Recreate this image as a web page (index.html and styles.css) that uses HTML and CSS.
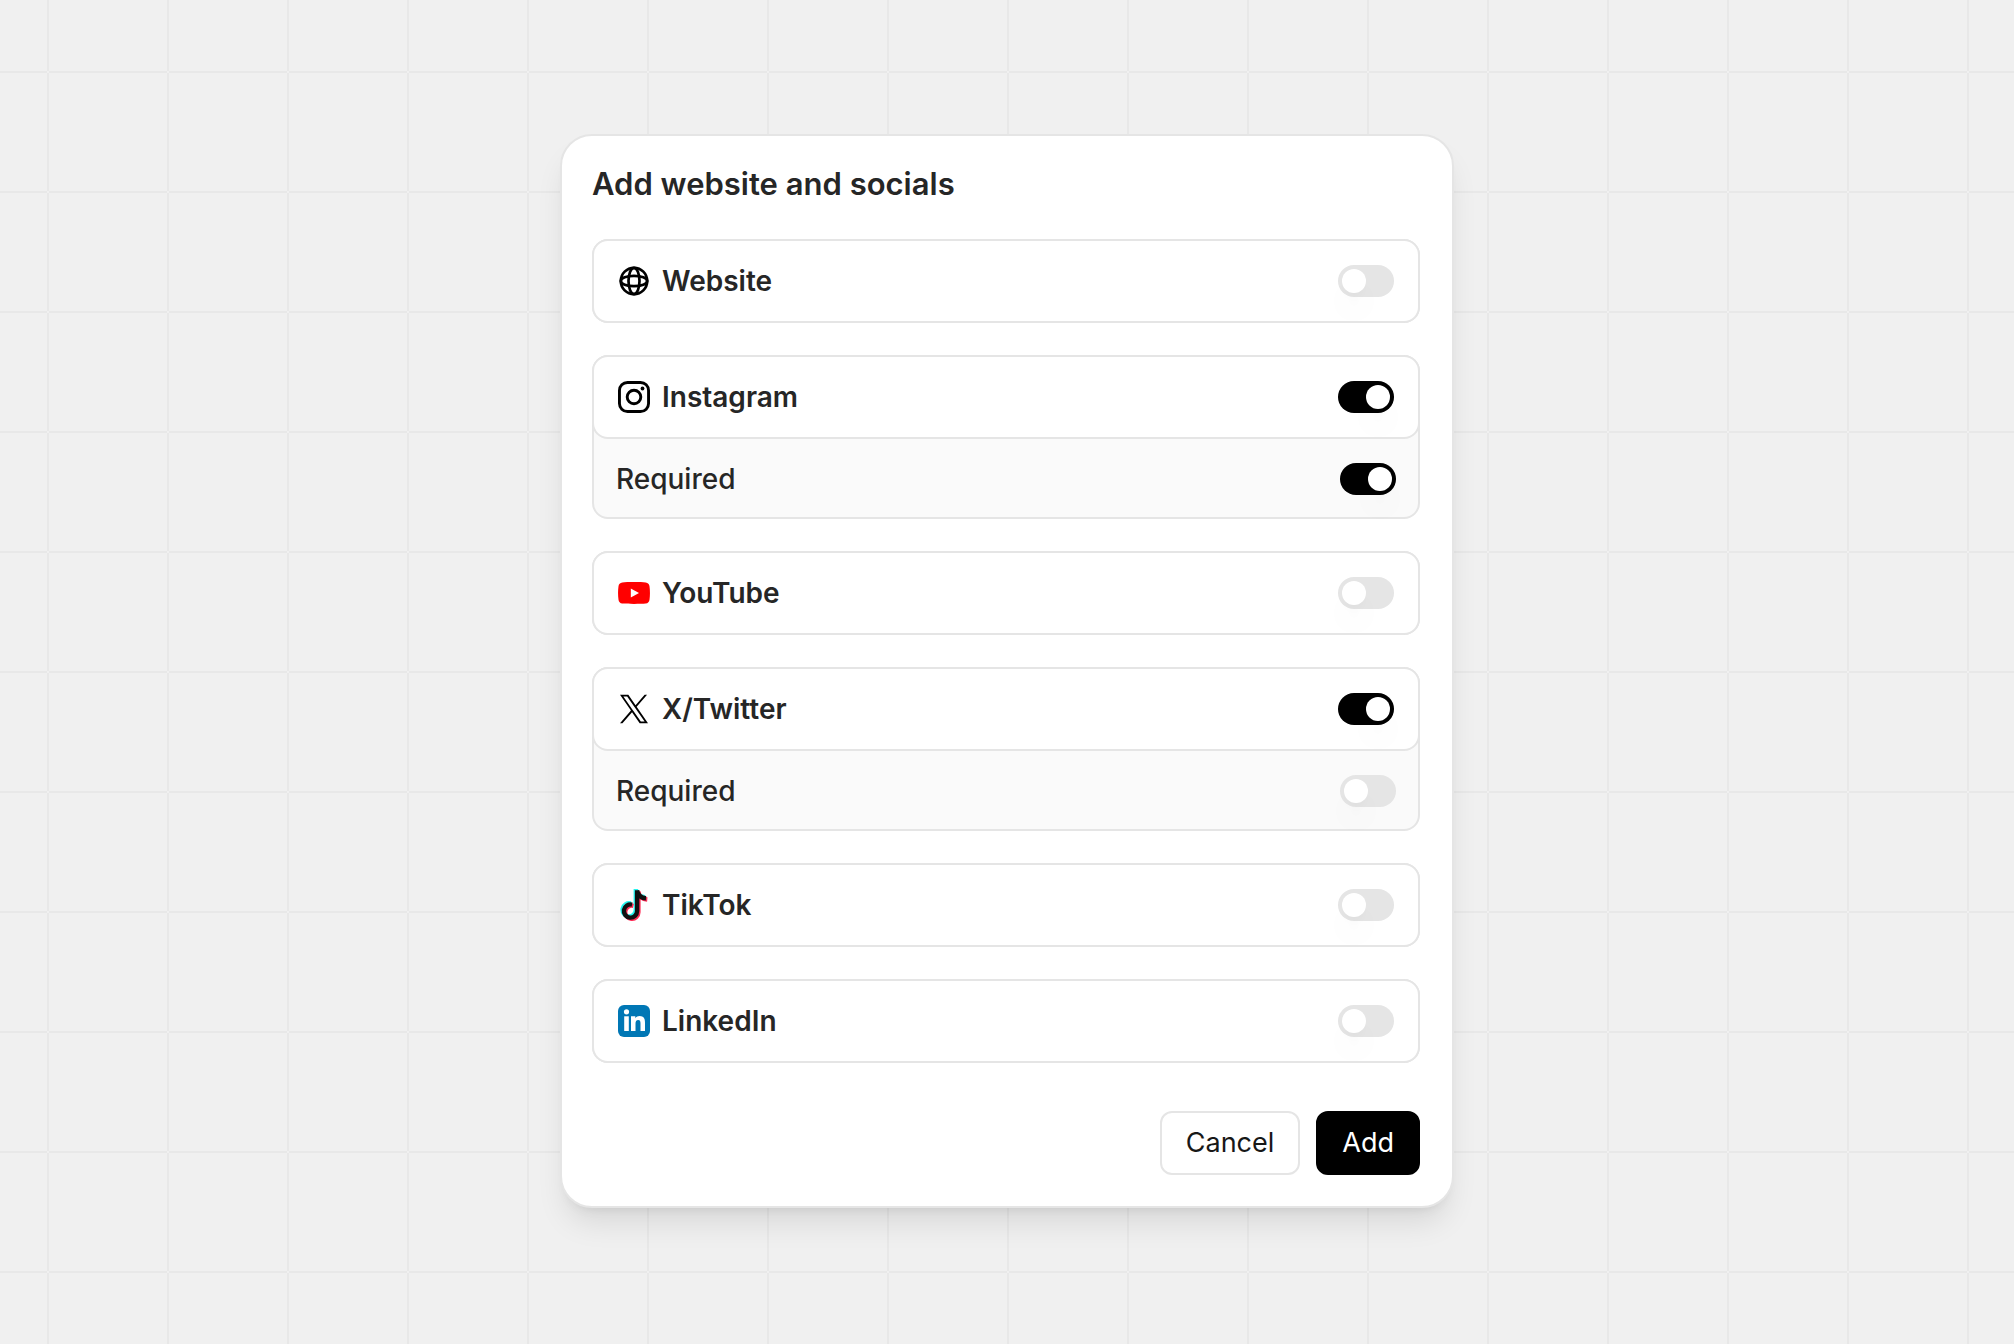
FILE: index.html
```html
<!DOCTYPE html>
<html lang="en">
<head>
<meta charset="utf-8">
<meta name="viewport" content="width=device-width, initial-scale=1">
<title>Add website and socials</title>
<link rel="stylesheet" href="styles.css">
</head>
<body>
<main class="dialog" role="dialog" aria-labelledby="dialog-title">
  <h1 class="dialog-title" id="dialog-title">Add website and socials</h1>
  <form class="form">
    <div class="group">
      <div class="row">
        <svg class="icon" viewBox="0 0 32 32" fill="none" stroke="#000" stroke-width="2.7" aria-hidden="true">
          <circle cx="16" cy="16" r="13.2"/>
          <ellipse cx="16" cy="16" rx="5.5" ry="13.2"/>
          <ellipse cx="16" cy="16" rx="13.2" ry="5.2"/>
        </svg>
        <label class="name" for="website">Website</label>
        <input class="switch" type="checkbox" role="switch" id="website">
      </div>
    </div>

    <div class="group">
      <div class="row">
        <svg class="icon" viewBox="0 0 32 32" fill="none" stroke="#000" stroke-width="2.9" aria-hidden="true">
          <rect x="1.45" y="1.45" width="29.1" height="29.1" rx="8"/>
          <circle cx="16" cy="16" r="6.8"/>
          <circle cx="24.5" cy="7.5" r="1.9" fill="#000" stroke="none"/>
        </svg>
        <label class="name" for="instagram">Instagram</label>
        <input class="switch" type="checkbox" role="switch" id="instagram" checked>
      </div>
      <div class="option">
        <label class="option-name" for="instagram-required">Required</label>
        <input class="switch" type="checkbox" role="switch" id="instagram-required" checked>
      </div>
    </div>

    <div class="group">
      <div class="row">
        <svg class="icon" viewBox="0 0 32 32" aria-hidden="true">
          <path fill="#f00" d="M4.3 5.4C9 4.900 23 4.900 27.700 5.400C30 5.700 31.200 7 31.500 9.200C32.100 13.500 32.100 18.500 31.500 22.800C31.200 25 30 26.300 27.700 26.600C23 27.100 9 27.100 4.300 26.600C2 26.300.8 25 .5 22.800C-.1 18.500-.1 13.500.5 9.200C.8 7 2 5.700 4.300 5.400Z"/>
          <path fill="#fff" d="M12.800 11.600v8.800l8.200-4.400z"/>
        </svg>
        <label class="name" for="youtube">YouTube</label>
        <input class="switch" type="checkbox" role="switch" id="youtube">
      </div>
    </div>

    <div class="group">
      <div class="row">
        <svg class="icon" viewBox="-86 -72 1372 1372" aria-hidden="true">
          <path d="M714.163 519.284L1160.890 0H1055.030L667.137 450.887L357.328 0H0L468.492 681.821L0 1226.370H105.866L515.491 750.218L842.672 1226.370H1200L714.137 519.284ZM569.165 687.828L521.697 619.934L144.011 79.694H306.615L611.412 515.685L658.880 583.579L1055.080 1150.300H892.476L569.165 687.854Z"/>
        </svg>
        <label class="name" for="twitter">X/Twitter</label>
        <input class="switch" type="checkbox" role="switch" id="twitter" checked>
      </div>
      <div class="option">
        <label class="option-name" for="twitter-required">Required</label>
        <input class="switch" type="checkbox" role="switch" id="twitter-required">
      </div>
    </div>

    <div class="group">
      <div class="row">
        <svg class="icon" viewBox="0 0 32 32" fill="none" stroke-width="4.4" aria-hidden="true">
          <defs>
            <path id="note" d="M19.100 1.200V22a6.600 6.600 0 1 1-5-6.400M19.100 1.200c.5 4.600 3.800 7.600 8.900 8.100"/>
          </defs>
          <use href="#note" stroke="#25f4ee" transform="translate(-1.300 -1.200)"/>
          <use href="#note" stroke="#fe2c55" transform="translate(1.300 1.200)"/>
          <use href="#note" stroke="#111"/>
        </svg>
        <label class="name" for="tiktok">TikTok</label>
        <input class="switch" type="checkbox" role="switch" id="tiktok">
      </div>
    </div>

    <div class="group">
      <div class="row">
        <svg class="icon" viewBox="0 0 32 32" aria-hidden="true">
          <rect width="32" height="32" rx="6" fill="#0077b5"/>
          <circle cx="8.500" cy="6.800" r="2.600" fill="#fff"/>
          <rect x="6.200" y="11.300" width="4.600" height="14.700" fill="#fff"/>
          <path fill="#fff" d="M13 11.300h4.300v2c.8-1.400 2.300-2.300 4.200-2.300 4.200 0 5.500 2.400 5.500 6.700V26h-4.500v-7.300c0-2-.3-3.700-2.300-3.700s-2.700 1.700-2.700 3.700V26H13z"/>
        </svg>
        <label class="name" for="linkedin">LinkedIn</label>
        <input class="switch" type="checkbox" role="switch" id="linkedin">
      </div>
    </div>

    <div class="actions">
      <button class="button" type="button">Cancel</button>
      <button class="button button-primary" type="submit">Add</button>
    </div>
  </form>
</main>
</body>
</html>
```
FILE: styles.css
```css
:root {
  --canvas: #f0f0f0;
  --grid: #e8e8e8;
  --border: #e5e5e5;
  --text: #262626;
  --shadow: 0 20px 30px -6px rgb(0 0 0 / 10%), 0 8px 12px -8px rgb(0 0 0 / 10%);
}

* {
  box-sizing: border-box;
}

body {
  display: flex;
  justify-content: center;
  align-items: flex-start;
  min-height: 100vh;
  margin: 0;
  padding: 134px 24px;
  background: conic-gradient(from 90deg at 2px 2px,
    var(--canvas) 0 90deg, var(--grid) 90deg 180deg,
    var(--canvas) 180deg 270deg, var(--grid) 270deg) 47px 71px / 120px 120px;
  color: var(--text);
  font-family: Inter, "Liberation Sans", sans-serif;
  font-size: 28px;
  line-height: 40px;
}

.dialog {
  width: 100%;
  max-width: 894px;
  padding: 28px 32px 31px 30px;
  border: 2px solid var(--border);
  border-radius: 32px;
  background: #fff;
  box-shadow: var(--shadow);
}

.dialog-title {
  margin: 0 0 35px;
  font-size: 31px;
  font-weight: 600;
}

.form {
  display: flex;
  flex-direction: column;
  gap: 32px;
}

.group {
  border: 2px solid var(--border);
  border-radius: 16px;
  background: #fafafa;
}

.row {
  display: flex;
  align-items: center;
  gap: 12px;
  margin: -2px;
  padding: 20px 24px;
  border: 2px solid var(--border);
  border-radius: 16px;
  background: #fff;
}

.icon {
  flex: none;
  width: 32px;
  height: 32px;
}

.name {
  flex: 1;
  font-weight: 600;
}

.option {
  display: flex;
  align-items: center;
  justify-content: space-between;
  padding: 22px 22px 18px;
}

.option-name {
  font-weight: 500;
}

.switch {
  flex: none;
  width: 56px;
  height: 32px;
  margin: 0;
  padding: 4px;
  border-radius: 16px;
  background: var(--border);
  appearance: none;
  cursor: pointer;
}

.switch::before {
  content: "";
  display: block;
  width: 24px;
  height: 24px;
  border-radius: 50%;
  background: #fff;
  box-shadow: var(--shadow);
}

.switch:checked {
  background: #000;
}

.switch:checked::before {
  margin-left: auto;
}

.actions {
  display: flex;
  justify-content: flex-end;
  gap: 16px;
  padding-top: 16px;
}

.button {
  padding: 10px 24px;
  border: 2px solid var(--border);
  border-radius: 12px;
  background: #fff;
  color: #171717;
  font: inherit;
  font-size: 27px;
  cursor: pointer;
}

.button-primary {
  border-color: #000;
  background: #000;
  color: #fff;
}
```
